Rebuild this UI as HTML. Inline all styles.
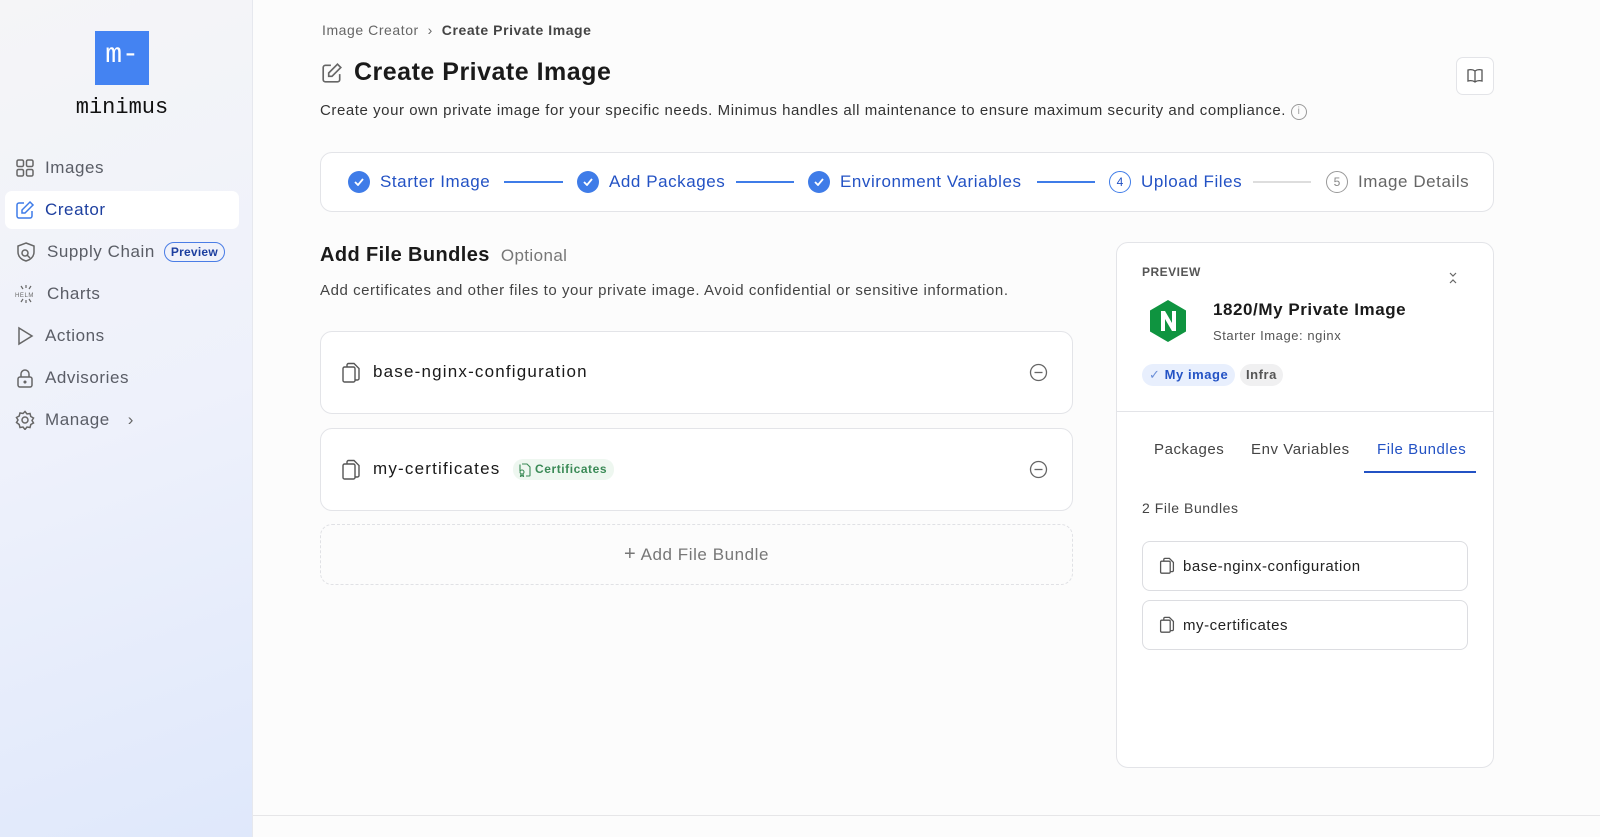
<!DOCTYPE html>
<html><head><meta charset="utf-8"><style>
*{box-sizing:border-box;margin:0;padding:0}
body{width:1600px;height:837px;overflow:hidden;font-family:"Liberation Sans",sans-serif;background:#fcfcfc;color:#1a1a1a;position:relative;letter-spacing:.035em}
.side{position:absolute;left:0;top:0;width:253px;height:837px;background:linear-gradient(160deg,#f5f5f7 0%,#eef1fb 50%,#dfe8fb 100%);border-right:1px solid #e6e8ee}
.logo{position:absolute;left:95px;top:31px;width:54px;height:54px;background:#4483f2;color:#fff;font-family:"Liberation Mono",monospace;font-size:28px;text-align:center;line-height:50px;letter-spacing:0}
.brand{position:absolute;left:0;width:244px;top:95px;text-align:center;font-family:"Liberation Mono",monospace;font-size:22px;color:#111;letter-spacing:0}
.nav{position:absolute;left:5px;width:234px;height:38px;display:flex;align-items:center;padding-left:10px;font-size:17px;color:#5a5d66}
.nav svg{margin-right:10px}
.nav.act{background:#fff;border-radius:7px;color:#1d3f9f}
.pill{margin-left:9px;border:1.5px solid #4a7de6;border-radius:11px;font-size:12px;font-weight:bold;color:#1d3f9f;padding:2px 6px;letter-spacing:.02em}
.abs{position:absolute}
.card{position:absolute;background:#fff;border:1px solid #e3e4e8;border-radius:12px}
.step{position:absolute;top:171px;font-size:17px;color:#2352c4;display:flex;align-items:center}
.ck{width:22px;height:22px;border-radius:50%;background:#3f7ce8;display:inline-flex;align-items:center;justify-content:center;margin-right:10px;letter-spacing:0}
.line{position:absolute;top:181px;height:2px;background:#3f7ce8}
.tab{position:absolute;top:441px;font-size:15px;color:#444}
.fb{position:absolute;left:1142px;width:326px;height:50px;border:1px solid #dcdde1;border-radius:8px;background:#fff;display:flex;align-items:center;padding-left:16px;font-size:15px;color:#222}
.fb svg{margin-right:8px}
.ttl{font-size:17px;letter-spacing:.07em}
</style></head><body>
<div class="side">
<div class="logo">m-</div>
<div class="brand">minimus</div>
<div class="nav" style="top:149px"><svg width="20" height="20" viewBox="0 0 20 20" fill="none" stroke="#666" stroke-width="1.5"><rect x="2" y="2" width="6.5" height="6.5" rx="1.5"/><rect x="11.5" y="2" width="6.5" height="6.5" rx="1.5"/><rect x="2" y="11.5" width="6.5" height="6.5" rx="1.5"/><rect x="11.5" y="11.5" width="6.5" height="6.5" rx="1.5"/></svg>Images</div>
<div class="nav act" style="top:191px"><svg width="20" height="20" viewBox="0 0 20 20" fill="none" stroke="#3f7ce8" stroke-width="1.5"><path d="M9 3H4a2 2 0 0 0-2 2v11a2 2 0 0 0 2 2h11a2 2 0 0 0 2-2v-5"/><path d="M15 2l3 3-8 8H7v-3z"/></svg>Creator</div>
<div class="nav" style="top:233px"><svg width="22" height="22" viewBox="0 0 22 22" fill="none" stroke="#666" stroke-width="1.5"><path d="M11 2l8 3v6c0 5-4 8-8 9-4-1-8-4-8-9V5z"/><circle cx="10" cy="12" r="3"/><path d="M12 14l3 3"/></svg>Supply Chain<span class="pill">Preview</span></div>
<div class="nav" style="top:275px"><svg width="22" height="22" viewBox="0 0 22 22" fill="none" stroke="#666" stroke-width="1.2"><path d="M6 3l2 3M16 3l-2 3M11 2v3M6 19l2-3M16 19l-2-3M11 20v-3"/><text x="0" y="14" font-size="6" fill="#666" stroke="none" font-family="Liberation Sans">HELM</text></svg>Charts</div>
<div class="nav" style="top:317px"><svg width="20" height="20" viewBox="0 0 20 20" fill="none" stroke="#666" stroke-width="1.5"><path d="M4 2l13 8-13 8z"/></svg>Actions</div>
<div class="nav" style="top:359px"><svg width="20" height="20" viewBox="0 0 20 20" fill="none" stroke="#666" stroke-width="1.5"><rect x="3" y="9" width="14" height="10" rx="2"/><path d="M6 9V6a4 4 0 0 1 8 0v3"/><circle cx="10" cy="14" r=".8" fill="#666"/></svg>Advisories</div>
<div class="nav" style="top:401px"><svg width="20" height="20" viewBox="0 0 20 20" fill="none" stroke="#666" stroke-width="1.5"><circle cx="10" cy="10" r="3"/><path d="M10 1.5l2 2.5 3-.5.8 3 2.7 1.5-1.5 2.5 1.5 2.5-2.7 1.5-.8 3-3-.5-2 2.5-2-2.5-3 .5-.8-3L1.5 12.5 3 10 1.5 7.5 4.2 6l.8-3 3 .5z"/></svg>Manage<span style="margin-left:18px;color:#666">&#x203A;</span></div>
</div>

<div class="abs" style="left:322px;top:22px;font-size:14px;color:#666">Image Creator &nbsp;&#x203A;&nbsp; <b style="color:#444">Create Private Image</b></div>
<svg class="abs" style="left:321px;top:62px" width="22" height="22" viewBox="0 0 20 20" fill="none" stroke="#666" stroke-width="1.5"><path d="M9 3H4a2 2 0 0 0-2 2v11a2 2 0 0 0 2 2h11a2 2 0 0 0 2-2v-5"/><path d="M15 2l3 3-8 8H7v-3z"/></svg>
<div class="abs" style="left:354px;top:58px;font-size:25px;font-weight:bold;color:#1a1a1a;letter-spacing:.02em">Create Private Image</div>
<div class="abs" style="left:320px;top:102px;font-size:15px;color:#333">Create your own private image for your specific needs. Minimus handles all maintenance to ensure maximum security and compliance. <span style="display:inline-block;width:16px;height:16px;border:1px solid #999;border-radius:50%;font-size:10px;text-align:center;line-height:14px;color:#999;vertical-align:1px;letter-spacing:0">i</span></div>
<div class="card" style="left:1456px;top:57px;width:38px;height:38px;border-radius:7px"><svg style="margin:9px" width="18" height="18" viewBox="0 0 18 18" fill="none" stroke="#555" stroke-width="1.3"><path d="M9 4c-2-1.5-5-1.5-7-1v11c2-.5 5-.5 7 1 2-1.5 5-1.5 7-1V3c-2-.5-5-.5-7 1zM9 4v11"/></svg></div>

<div class="card" style="left:320px;top:152px;width:1174px;height:60px"></div>
<div class="step" style="left:348px"><span class="ck"><svg width="10" height="8"><path d="M1 4l3 3 5-6" stroke="#fff" stroke-width="1.8" fill="none"/></svg></span>Starter Image</div>
<div class="line" style="left:504px;width:59px"></div>
<div class="step" style="left:577px"><span class="ck"><svg width="10" height="8"><path d="M1 4l3 3 5-6" stroke="#fff" stroke-width="1.8" fill="none"/></svg></span>Add Packages</div>
<div class="line" style="left:736px;width:58px"></div>
<div class="step" style="left:808px"><span class="ck"><svg width="10" height="8"><path d="M1 4l3 3 5-6" stroke="#fff" stroke-width="1.8" fill="none"/></svg></span>Environment Variables</div>
<div class="line" style="left:1037px;width:58px"></div>
<div class="step" style="left:1109px"><span class="ck" style="background:#fff;border:1.5px solid #3f7ce8;color:#2352c4;font-size:12px">4</span>Upload Files</div>
<div class="line" style="left:1253px;width:58px;background:#ddd"></div>
<div class="step" style="left:1326px;color:#666"><span class="ck" style="background:#fff;border:1.5px solid #999;color:#888;font-size:12px">5</span>Image Details</div>

<div class="abs" style="left:320px;top:244px;font-size:20px;font-weight:bold;letter-spacing:.02em">Add File Bundles <span style="font-size:17px;font-weight:normal;color:#777">&nbsp;Optional</span></div>
<div class="abs" style="left:320px;top:282px;font-size:15px;color:#444">Add certificates and other files to your private image. Avoid confidential or sensitive information.</div>

<div class="card" style="left:320px;top:331px;width:753px;height:83px"></div>
<svg class="abs" style="left:341px;top:362px" width="20" height="22" viewBox="0 0 20 22" fill="none" stroke="#555" stroke-width="1.4"><path d="M6 5V3a1.5 1.5 0 0 1 1.5-1.5H13l5 5v10a1.5 1.5 0 0 1-1.5 1.5H14"/><rect x="2" y="5" width="12" height="15" rx="1.5"/></svg>
<div class="abs ttl" style="left:373px;top:362px">base-nginx-configuration</div>
<svg class="abs" style="left:1029px;top:363px" width="19" height="19"><circle cx="9.5" cy="9.5" r="8" fill="none" stroke="#666" stroke-width="1.3"/><path d="M5.5 9.5h8" stroke="#666" stroke-width="1.3"/></svg>

<div class="card" style="left:320px;top:428px;width:753px;height:83px"></div>
<svg class="abs" style="left:341px;top:459px" width="20" height="22" viewBox="0 0 20 22" fill="none" stroke="#555" stroke-width="1.4"><path d="M6 5V3a1.5 1.5 0 0 1 1.5-1.5H13l5 5v10a1.5 1.5 0 0 1-1.5 1.5H14"/><rect x="2" y="5" width="12" height="15" rx="1.5"/></svg>
<div class="abs ttl" style="left:373px;top:459px">my-certificates</div>
<div class="abs" style="left:513px;top:459px;height:21px;background:#eef7f0;border-radius:10px;padding:0 7px 0 5px;font-size:12px;font-weight:bold;color:#3a8a56;line-height:21px;display:flex;align-items:center"><svg width="13" height="14" viewBox="0 0 13 14" fill="none" stroke="#3a8a56" stroke-width="1.1" style="margin-right:4px"><path d="M4 1h5l3 3v8.5a.5.5 0 0 1-.5.5H8M2 8V1.5"/><circle cx="4" cy="9" r="2"/><path d="M3 11l-.5 2.5L4 12.5l1.5 1L5 11"/></svg>Certificates</div>
<svg class="abs" style="left:1029px;top:460px" width="19" height="19"><circle cx="9.5" cy="9.5" r="8" fill="none" stroke="#666" stroke-width="1.3"/><path d="M5.5 9.5h8" stroke="#666" stroke-width="1.3"/></svg>

<div class="abs" style="left:320px;top:524px;width:753px;height:61px;border:1px dashed #e0e1e5;border-radius:12px;text-align:center;line-height:59px;font-size:17px;color:#777"><span style="font-size:20px">+</span> Add File Bundle</div>

<div class="card" style="left:1116px;top:242px;width:378px;height:526px"></div>
<div class="abs" style="left:1142px;top:265px;font-size:12px;font-weight:bold;color:#555;letter-spacing:.5px">PREVIEW</div>
<svg class="abs" style="left:1448px;top:272px" width="10" height="12" viewBox="0 0 10 12" fill="none" stroke="#666" stroke-width="1.2"><path d="M2 1l3 3 3-3M2 11l3-3 3 3"/></svg>
<svg class="abs" style="left:1148px;top:299px" width="40" height="44" viewBox="0 0 40 44"><path d="M20 1l18 10.5v21L20 43 2 32.5v-21z" fill="#0f9440"/><path d="M13 32V12h4l7 12V12h4v20h-4l-7-12v12z" fill="#fff"/></svg>
<div class="abs" style="left:1213px;top:300px;font-size:17px;font-weight:bold;color:#1a1a1a">1820/My Private Image</div>
<div class="abs" style="left:1213px;top:328px;font-size:13px;color:#555">Starter Image: nginx</div>
<div class="abs" style="left:1142px;top:364px;height:22px;background:#e8effd;border-radius:11px;padding:0 7px;font-size:13px;font-weight:bold;color:#2352c4;line-height:22px"><span style="font-weight:normal;color:#6b8fd8">&#x2713;</span> My image</div>
<div class="abs" style="left:1240px;top:364px;height:22px;background:#f0f0f1;border-radius:11px;padding:0 6px;font-size:13px;font-weight:bold;color:#555;line-height:22px">Infra</div>
<div class="abs" style="left:1117px;top:411px;width:376px;height:1px;background:#e3e4e8"></div>
<div class="tab" style="left:1154px">Packages</div>
<div class="tab" style="left:1251px">Env Variables</div>
<div class="tab" style="left:1377px;color:#2352c4">File Bundles</div>
<div class="abs" style="left:1364px;top:471px;width:112px;height:2px;background:#2352c4"></div>
<div class="abs" style="left:1142px;top:500px;font-size:14px;color:#444">2 File Bundles</div>
<div class="fb" style="top:541px"><svg width="16" height="18" viewBox="0 0 20 22" fill="none" stroke="#555" stroke-width="1.6"><path d="M6 5V3a1.5 1.5 0 0 1 1.5-1.5H13l5 5v10a1.5 1.5 0 0 1-1.5 1.5H14"/><rect x="2" y="5" width="12" height="15" rx="1.5"/></svg>base-nginx-configuration</div>
<div class="fb" style="top:600px"><svg width="16" height="18" viewBox="0 0 20 22" fill="none" stroke="#555" stroke-width="1.6"><path d="M6 5V3a1.5 1.5 0 0 1 1.5-1.5H13l5 5v10a1.5 1.5 0 0 1-1.5 1.5H14"/><rect x="2" y="5" width="12" height="15" rx="1.5"/></svg>my-certificates</div>
<div class="abs" style="left:253px;top:815px;width:1347px;height:1px;background:#e6e6e8"></div>
</body></html>
